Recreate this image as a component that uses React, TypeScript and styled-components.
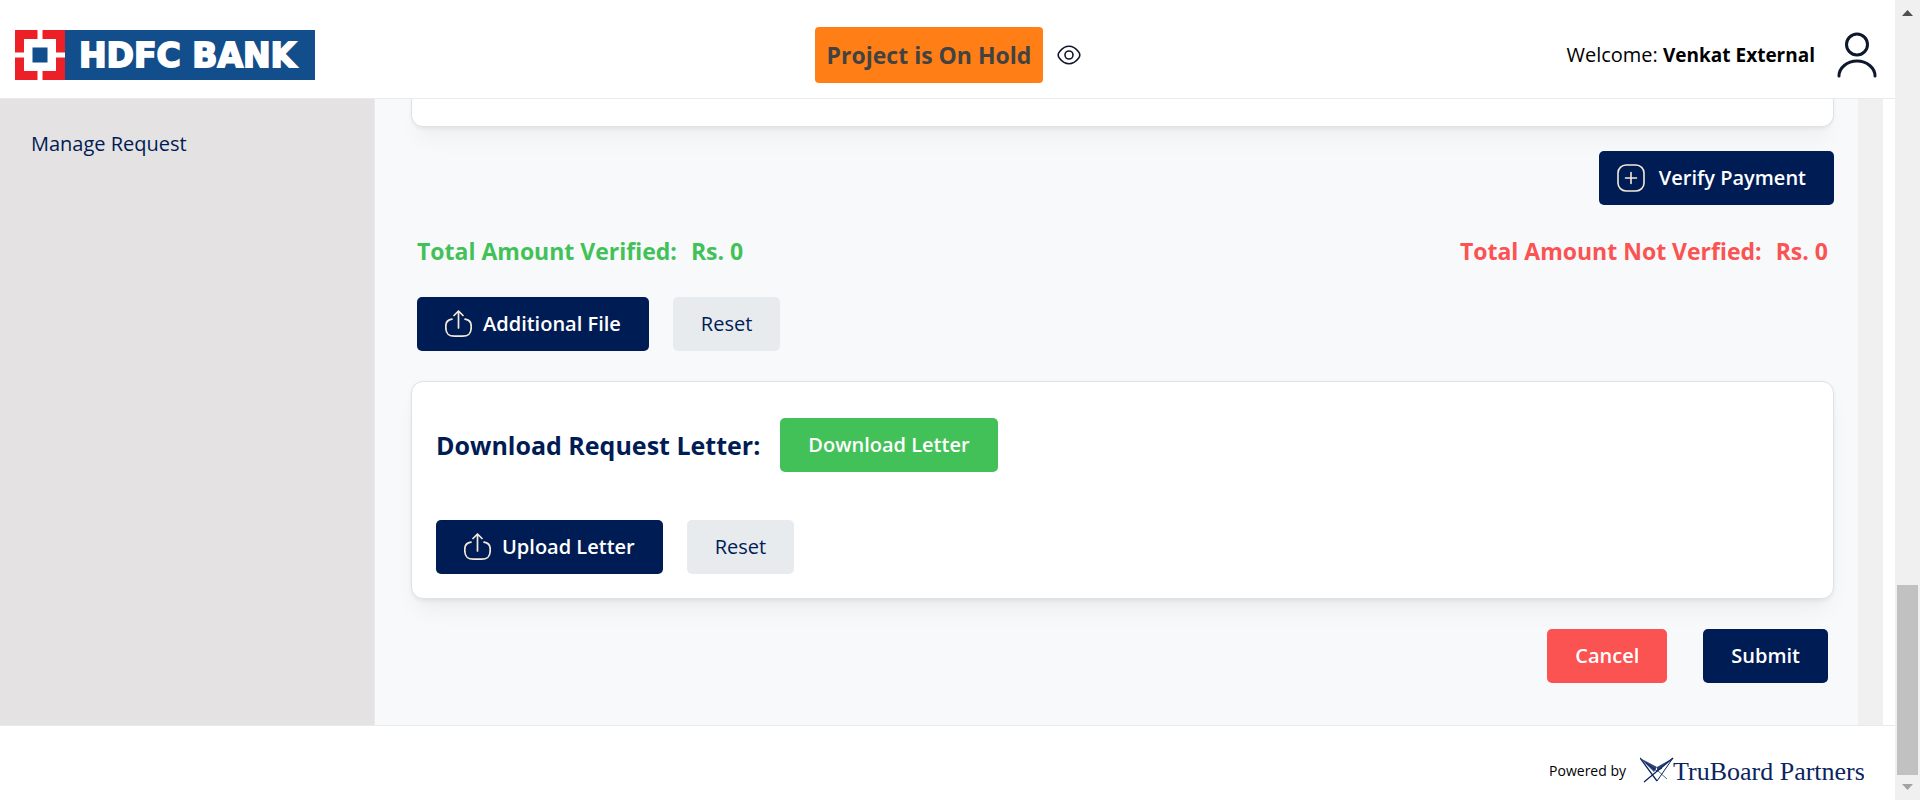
import React from 'react';
import styled, { createGlobalStyle, css } from 'styled-components';

const Global = createGlobalStyle`
  *, *::before, *::after { box-sizing: border-box; }
  html, body { margin: 0; overflow: hidden; }
  body { font-family: "Open Sans", "Noto Sans", sans-serif; color: #000; background: #fff; }
  h1, p, dl, dd { margin: 0; }
`;

const navy = '#001c54';

const Shell = styled.div`
  display: flex;
  height: 100vh;
`;

const Page = styled.div`
  flex: 1;
  min-width: 0;
  display: flex;
  flex-direction: column;
`;

const Header = styled.header`
  display: grid;
  grid-template-columns: 1fr auto 1fr;
  align-items: center;
  height: 99px;
  padding: 12px 18px 0 15px;
  border-bottom: 1px solid #e8eaec;
`;

const BrandLink = styled.a`
  display: block;
  height: 50px;
  justify-self: start;
`;

const Status = styled.div`
  display: flex;
  align-items: center;
  gap: 14px;
  padding-left: 4px;
`;

const StatusBadge = styled.span`
  padding: 10px 12px;
  border-radius: 4px;
  background: #ff7f16;
  color: #424242;
  font-size: 23px;
  line-height: 36px;
  font-weight: 700;
`;

const IconButton = styled.button`
  display: flex;
  padding: 0;
  border: 0;
  background: none;
  color: #0f172a;
`;

const Account = styled.div`
  display: flex;
  align-items: center;
  justify-content: flex-end;
  gap: 22px;
  font-size: 20px;
  line-height: 28px;

  b {
    font-size: 19px;
  }
`;

const Body = styled.div`
  flex: 1;
  min-height: 0;
  display: flex;
  padding-right: 12px;
`;

const Sidebar = styled.nav`
  width: 375px;
  flex-shrink: 0;
  padding: 15px;
  background: #e4e2e2;
  border-right: 1px solid #e8eaec;
`;

const NavLink = styled.a`
  display: block;
  padding: 16px;
  color: ${navy};
  font-size: 20px;
  line-height: 28px;
  text-decoration: none;
`;

const Content = styled.main`
  flex: 1;
  min-width: 0;
  padding: 0 24px 0 36px;
  background: #f8f9fb;
  overflow: hidden;
`;

const Gutter = styled.div`
  width: 25px;
  background: #f0f0f0;
`;

const Card = styled.section<{ $continued?: boolean }>`
  margin-top: 30px;
  padding: 36px 24px 24px;
  background: #fff;
  border: 1px solid #dee2e6;
  border-radius: 12px;
  box-shadow: 0 1px 4px rgba(0, 0, 0, 0.05), 0 15px 23px -5px rgba(0, 0, 0, 0.05),
    0 7px 7px -5px rgba(0, 0, 0, 0.04);
  ${(p) =>
    p.$continued &&
    css`
      height: 28px;
      margin-top: 0;
      padding: 0;
      border-top: 0;
      border-radius: 0 0 12px 12px;
    `}
`;

const Row = styled.div<{ $gap?: number; $end?: boolean; $top?: number; $inset?: boolean }>`
  display: flex;
  align-items: center;
  gap: ${(p) => p.$gap ?? 24}px;
  justify-content: ${(p) => (p.$end ? 'flex-end' : 'flex-start')};
  margin-top: ${(p) => p.$top ?? 0}px;
  padding: 0 ${(p) => (p.$inset ? 6 : 0)}px;
`;

const tones = {
  primary: css`background: ${navy}; color: #fff;`,
  success: css`background: #42c158; color: #fff;`,
  danger: css`background: #fb5252; color: #fff;`,
  muted: css`background: #e8ebee; color: ${navy}; font-weight: 400;`,
};

const Button = styled.button<{ $tone: keyof typeof tones; $compact?: boolean }>`
  display: inline-flex;
  align-items: center;
  gap: ${(p) => (p.$compact ? 14 : 11)}px;
  height: 54px;
  padding: 0 28px 0 ${(p) => (p.$compact ? 18 : 28)}px;
  border: 0;
  border-radius: 5px;
  font-family: inherit;
  font-size: 20px;
  font-weight: 600;
  line-height: 28px;
  white-space: nowrap;
  ${(p) => tones[p.$tone]}
`;

const Totals = styled.dl`
  display: flex;
  justify-content: space-between;
  margin-top: 28px;
  padding: 0 6px;
  font-size: 23px;
  line-height: 36px;
  font-weight: 700;
`;

const Total = styled.div<{ $color: string }>`
  display: flex;
  gap: 14px;
  color: ${(p) => p.$color};
`;

const Heading = styled.h1`
  color: ${navy};
  font-size: 25px;
  line-height: 36px;
  font-weight: 700;
`;

const Footer = styled.footer`
  display: flex;
  align-items: center;
  justify-content: flex-end;
  gap: 14px;
  height: 75px;
  padding: 16px 31px 0 0;
  border-top: 1px solid #e8eaec;
  font-size: 14px;
  line-height: 20px;
`;

const ScrollBar = styled.div`
  width: 25px;
  display: flex;
  flex-direction: column;
  align-items: center;
  background: #f0f0f0;
`;

const Thumb = styled.div`
  width: 21px;
  height: 190px;
  background: #c1c1c1;
`;

const Arrow = styled.svg`
  width: 25px;
  height: 25px;
  flex-shrink: 0;
`;

const Track = styled.div`
  flex: 1;
`;

function BankLogo() {
  return (
    <svg width="300" height="50" viewBox="0 0 300 50" role="img" aria-label="HDFC Bank" display="block">
      <rect x="50" width="250" height="50" fill="#124d8c" />
      <rect width="50" height="50" fill="#ed2027" />
      <path d="M22.5 0h5v50h-5zM0 22.5h50v5H0zM9 9h32v32H9z" fill="#fff" />
      <rect x="17.5" y="17.5" width="15" height="15" fill="#124d8c" />
      <text
        x="64"
        y="37"
        fill="#fff"
        stroke="#fff"
        strokeWidth="1.8"
        fontFamily="'DejaVu Sans', sans-serif"
        fontSize="33"
        fontWeight="700"
      >
        HDFC BANK
      </text>
    </svg>
  );
}

function PartnerLogo() {
  return (
    <svg width="224" height="34" viewBox="0 0 224 34" role="img" aria-label="TruBoard Partners">
      <path d="M0 4l17 9-3 5zM33 4L17 13v4z" fill="#0b2560" opacity="0.85" />
      <g fill="none" stroke="#0b2560">
        <path d="M0 4l17 23M33 4L4 28" strokeWidth="1.3" />
        <path d="M17 27L33 4M6 9l11 8 5-3" strokeWidth="1" />
        <path d="M17 16l10 9" strokeWidth="0.7" />
      </g>
      <text x="33" y="26" fill="#0b2560" fontFamily="'Liberation Serif', serif" fontSize="26">TruBoard Partners</text>
    </svg>
  );
}

function EyeIcon() {
  return (
    <svg width="24" height="24" viewBox="0 0 24 24" fill="none" stroke="currentColor" strokeWidth="1.6">
      <path d="M2.5 15.2C1.6 14.2 1.2 13.6 1.2 12s.4-2.2 1.3-3.2C4.4 6.3 7.6 3.3 12 3.3s7.6 3 9.500 5.500c.9 1 1.300 1.600 1.300 3.200s-.4 2.200-1.300 3.200C19.600 17.700 16.400 20.700 12 20.700s-7.600-3-9.500-5.500z" />
      <circle cx="12" cy="12" r="4" />
    </svg>
  );
}

function UserIcon() {
  return (
    <svg width="40" height="46" viewBox="0 0 40 46" fill="none" stroke="currentColor" strokeWidth="3" strokeLinecap="round">
      <circle cx="20" cy="12.5" r="10.5" />
      <path d="M2 44c0-8 8-15 18-15s18 7 18 15" />
    </svg>
  );
}

function UploadIcon() {
  return (
    <svg width="27" height="28" viewBox="0 0 27 28" fill="none" stroke="#f5ead9" strokeWidth="1.7" strokeLinecap="round" strokeLinejoin="round">
      <path d="M13.5 18V1M9 5.5L13.5 1 18 5.5" />
      <path d="M7 9.2c-4 .5-6.200 3-6.200 7v1.300c0 6.500 2.500 8.700 8.700 8.700h8c6.200 0 8.700-2.200 8.700-8.700v-1.300c0-4-2.200-6.500-6.200-7" />
    </svg>
  );
}

function PlusIcon() {
  return (
    <svg width="28" height="28" viewBox="0 0 28 28" fill="none" stroke="#f5ead9" strokeWidth="1.6" strokeLinecap="round">
      <rect x="1" y="1" width="26" height="26" rx="8" />
      <path d="M14 8.5v11M8.5 14h11" />
    </svg>
  );
}

export default function App() {
  return (
    <Shell>
      <Global />
      <Page>
        <Header>
          <BrandLink href="#home"><BankLogo /></BrandLink>
          <Status>
            <StatusBadge>Project is On Hold</StatusBadge>
            <IconButton type="button" aria-label="View hold details"><EyeIcon /></IconButton>
          </Status>
          <Account>
            <span>Welcome: <b>Venkat External</b></span>
            <IconButton type="button" aria-label="Account"><UserIcon /></IconButton>
          </Account>
        </Header>
        <Body>
          <Sidebar>
            <NavLink href="#requests">Manage Request</NavLink>
          </Sidebar>
          <Content>
            <Card $continued />
            <Row $end $top={24}>
              <Button type="button" $tone="primary" $compact><PlusIcon />Verify Payment</Button>
            </Row>
            <Totals>
              <Total $color="#42c158"><dt>Total Amount Verified:</dt><dd>Rs. 0</dd></Total>
              <Total $color="#fb5252"><dt>Total Amount Not Verfied:</dt><dd>Rs. 0</dd></Total>
            </Totals>
            <Row $top={28} $inset>
              <Button type="button" $tone="primary"><UploadIcon />Additional File</Button>
              <Button type="button" $tone="muted">Reset</Button>
            </Row>
            <Card>
              <Row $gap={20}>
                <Heading>Download Request Letter:</Heading>
                <Button type="button" $tone="success">Download Letter</Button>
              </Row>
              <Row $top={48}>
                <Button type="button" $tone="primary"><UploadIcon />Upload Letter</Button>
                <Button type="button" $tone="muted">Reset</Button>
              </Row>
            </Card>
            <Row $end $top={30} $gap={36} $inset>
              <Button type="button" $tone="danger">Cancel</Button>
              <Button type="button" $tone="primary">Submit</Button>
            </Row>
          </Content>
          <Gutter />
        </Body>
        <Footer>
          <span>Powered by</span>
          <PartnerLogo />
        </Footer>
      </Page>
      <ScrollBar aria-hidden="true">
        <Arrow viewBox="0 0 25 25"><path d="M7 16h11l-5.5-6z" fill="#505050" /></Arrow>
        <Track />
        <Thumb />
        <Arrow viewBox="0 0 25 25"><path d="M7 9h11l-5.5 6z" fill="#a3a3a3" /></Arrow>
      </ScrollBar>
    </Shell>
  );
}
